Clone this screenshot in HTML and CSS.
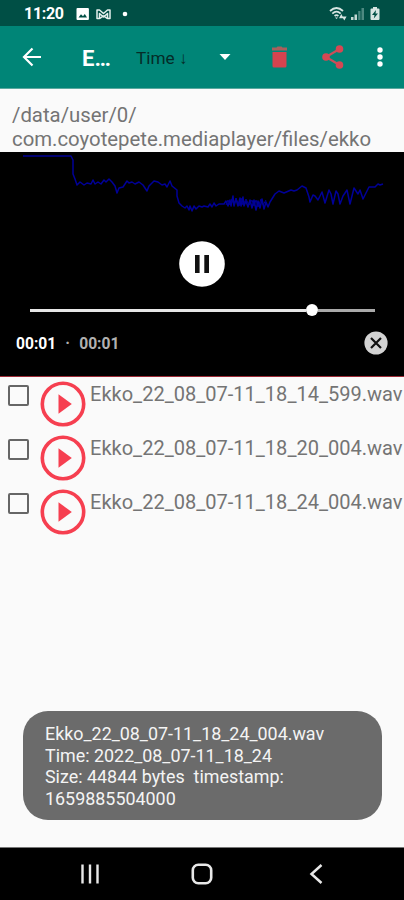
FILE: index.html
```html
<!DOCTYPE html>
<html lang="en">
<head>
<meta charset="utf-8">
<meta name="viewport" content="width=device-width">
<title>Ekko</title>
<link rel="stylesheet" href="styles.css">
</head>
<body>
<div class="phone">
  <header class="status">
    <span class="clock">11:20</span>
    <svg class="notices" width="54" height="14" viewBox="0 0 54 14">
      <path fill="#fff" fill-rule="evenodd" d="M1.500 1h10.400q1 0 1 1v10q0 1-1 1H1.500q-1 0-1-1V2q0-1 1-1zM2.500 10.500h8.500L8.800 7 7 9.300 5 7.300z"/>
      <path fill="none" stroke="#e4efed" stroke-width="1.500" stroke-linejoin="round" d="M21 3v8.500h2.500V6.500l4 3.500 4-3.500v5H34V3h-2.500l-4 3.500-4-3.500zM24 11.500l3.500-3M31 11.500l-3.500-3"/>
      <circle cx="49" cy="7" r="2.300" fill="#fff"/>
    </svg>
    <svg class="signals" width="54" height="16" viewBox="0 0 54 16">
      <g fill="none" stroke="#d7e5e2" stroke-width="1.800">
        <path d="M1 5Q7.500-1 14 5M3.300 7.600q4.200-4 8.400 0M5.600 10q1.900-1.700 3.800 0"/>
      </g>
      <path fill="#d7e5e2" d="M6 11.500h3L7.500 13zM10 12.300l2.300-4.300 2.300 4.300zM13 10.500h4.600l-2.300 4z"/>
      <path fill="#c3d7d3" d="M22 11h2.500v3H22zM25.500 8.500H28V14h-2.500z"/>
      <path fill="#4d8981" d="M29.200 5h2.300v9h-2.300zM32.500 2H35v12h-2.500z"/>
      <path fill="#d7e5e2" d="M44 1h4v1.500h1.500q1 0 1 1V13q0 1-1 1h-7q-1 0-1-1V3.500q0-1 1-1H44z"/>
      <path fill="#004f45" d="M47 4l-4 5h2.500l-.7 3.500L49 7.500h-2.500z"/>
    </svg>
  </header>
  <nav class="appbar">
    <svg class="back" width="20" height="20" viewBox="0 0 20 20"><path fill="none" stroke="#fff" stroke-width="2.200" d="M19 10H2.500M10.500 1.500L2 10l8.500 8.500"/></svg>
    <h1 class="title">E…</h1>
    <span class="sort">Time ↓</span>
    <svg class="caret" width="12" height="6" viewBox="0 0 12 6"><path fill="#fff" d="M.5 0h11L6 6z"/></svg>
    <svg class="trash" width="17" height="22" viewBox="0 0 17 22"><path fill="#d4434f" d="M1.500 6h14v14q0 1.500-1.500 1.500H3Q1.500 21.500 1.500 20z"/><path fill="#a95f5c" d="M1 1.500h4.500L6.500.500h4l1 1H16V4.500H1z"/></svg>
    <svg class="share" width="22" height="24" viewBox="0 0 22 24"><path fill="none" stroke="#c94f59" stroke-width="2.200" d="M17.500 4L4 12l13.500 8"/><g fill="#d64753"><circle cx="17.500" cy="4" r="3.800"/><circle cx="4" cy="12" r="3.800"/><circle cx="17.500" cy="20" r="3.800"/></g></svg>
    <svg class="more" width="6" height="20" viewBox="0 0 6 20"><g fill="#fff"><circle cx="3" cy="3" r="2.700"/><circle cx="3" cy="10" r="2.700"/><circle cx="3" cy="17" r="2.700"/></g></svg>
  </nav>
  <p class="path">/data/user/0/<br>com.coyotepete.mediaplayer/files/ekko</p>
  <section class="player">
    <svg class="wave" width="404" height="78" viewBox="0 0 404 78">
      <path fill="none" stroke="#000098" stroke-width="1.500" stroke-linejoin="round" d="M23 4H71L73 8V22L75 27L77 33L80 30L84 33L87 31L91 32L93 28L95 32L98 30L101 32L104 28L106 30L109 27L112 30L115 34L117 41L119 36L123 35L127 29L129 31L132 30L135 32L139 30L143 33L147 39L149 34L154 29L158 30L162 33L165 32L167 35L170 29L172 34L177 38V44L179 51L182 54L185 56L187 54L189 58L190 54L192 59L194 54L196 57L199 54L202 55L204 54L208 55L210 52L212 55L214 51L216 54L219 52L224 52L226 49L228 54L230 48L231 54L233 44L234 54L236 47L238 54L240 46L241 54L243 45L244 54L246 49L248 55L250 48L252 56L254 48L256 58L258 49L260 56L262 47L264 57L266 50L268 55L270 50L275 42L279 39L284 41L291 38L294 39L297 38L302 34L306 36L309 45L310 50L313 43L315 44L318 48L322 40L325 51L329 38L331 42L333 52L336 39L338 42L340 52L343 44L347 38L350 52L354 36L358 42L360 38L363 47L367 39L369 35L375 35L378 32L380 33L383 32"/>
      <path fill="none" stroke="#000092" stroke-width="1" d="M226 53l2-5 2 5 2-6 2 6 2-7 3 8 2-8 2 7 3-6 3 6 3-5 2 6 2-6 2 7 3-8 2 6 3-5"/>
    </svg>
    <svg class="pause" width="46" height="46" viewBox="0 0 46 46"><circle cx="23" cy="23" r="22.800" fill="#fff"/><path fill="#111" d="M16 14h4.600v18H16zM25.300 14H30v18h-4.700z"/></svg>
    <div class="seek"><i class="played"></i><i class="thumb"></i><i class="rest"></i></div>
    <div class="times">
      <span class="now">00:01</span><span class="dot">·</span><span class="total">00:01</span>
      <svg class="close" width="24" height="24" viewBox="0 0 24 24"><circle cx="12" cy="12" r="11.600" fill="#d3d3d3"/><path stroke="#111" stroke-width="2.200" d="M7 7l10 10M17 7L7 17"/></svg>
    </div>
  </section>
  <ul class="files">
    <li class="file"><span class="check"></span><svg class="play" width="46" height="46" viewBox="0 0 46 46"><circle cx="23" cy="23" r="20.700" fill="none" stroke="#f63f50" stroke-width="3.600"/><path fill="#f63f50" d="M18.500 13.300l13.300 9.700-13.300 9.700z"/></svg><span class="name">Ekko_22_08_07-11_18_14_599.wav</span></li>
    <li class="file"><span class="check"></span><svg class="play" width="46" height="46" viewBox="0 0 46 46"><circle cx="23" cy="23" r="20.700" fill="none" stroke="#f63f50" stroke-width="3.600"/><path fill="#f63f50" d="M18.500 13.300l13.300 9.700-13.300 9.700z"/></svg><span class="name">Ekko_22_08_07-11_18_20_004.wav</span></li>
    <li class="file"><span class="check"></span><svg class="play" width="46" height="46" viewBox="0 0 46 46"><circle cx="23" cy="23" r="20.700" fill="none" stroke="#f63f50" stroke-width="3.600"/><path fill="#f63f50" d="M18.500 13.300l13.300 9.700-13.300 9.700z"/></svg><span class="name">Ekko_22_08_07-11_18_24_004.wav</span></li>
  </ul>
  <div class="toast">Ekko_22_08_07-11_18_24_004.wav<br>Time: 2022_08_07-11_18_24<br>Size: 44844 bytes&nbsp; timestamp:<br>1659885504000</div>
  <footer class="keys">
    <svg width="20" height="20" viewBox="0 0 20 20"><path stroke="#e8e8e8" stroke-width="2.400" d="M2.500.500v19M10 .5v19M17.500.500v19"/></svg>
    <svg class="home" width="22" height="22" viewBox="0 0 22 22"><rect x="1.800" y="1.800" width="18.400" height="18.400" rx="5.500" fill="none" stroke="#e8e8e8" stroke-width="2.600"/></svg>
    <svg class="prev" width="14" height="20" viewBox="0 0 14 20"><path fill="none" stroke="#e8e8e8" stroke-width="2.500" d="M12.500 1L2.500 10l10 9"/></svg>
  </footer>
</div>
</body>
</html>
```
FILE: styles.css
```css
* { box-sizing: border-box; }
body { margin: 0; font-family: Roboto, "Liberation Sans", sans-serif; background: #fafafa; }
svg { display: block; flex: none; }
.phone { width: 404px; height: 900px; display: flex; flex-direction: column; overflow: hidden; background: #fafafa; }

.status { height: 26px; flex: none; display: flex; align-items: center; padding: 1px 21px 0 24px; background: #004f45; }
.clock { width: 52px; color: #fff; font-size: 16px; font-weight: 700; line-height: 24px; letter-spacing: -0.3px; }
.signals { margin-left: auto; }

.appbar { height: 63px; flex: none; display: flex; align-items: center; padding-left: 22px; background: #008577; border-bottom: 1px solid #5aa99f; }
.title { width: 54px; margin: 4px 0 0 40px; color: #fff; font-size: 22px; font-weight: 700; line-height: 28px; }
.sort { width: 83px; padding-top: 2px; color: #052c28; font-size: 17.2px; line-height: 24px; white-space: nowrap; }
.trash { margin-left: 40px; }
.share { margin-left: 34px; }
.more { margin-left: 33px; }

.path { height: 63px; flex: none; margin: 0; padding: 14px 12px 0; color: #747474; font-size: 20.35px; line-height: 24px; white-space: nowrap; }

.player { height: 225px; flex: none; display: flex; flex-direction: column; background: #000; border-bottom: 1px solid #9d2b36; }
.pause { margin: 11px 0 0 179px; }
.seek { display: flex; align-items: center; height: 12px; margin: 17px 29px 0 30px; }
.played { width: 276px; height: 3px; background: #e6e6e6; }
.thumb { width: 12px; height: 12px; border-radius: 50%; background: #fff; }
.rest { flex: 1; height: 3px; background: #a9a9a9; }
.times { display: flex; align-items: center; height: 24px; margin: 15px 16px 0; font-size: 15.6px; font-weight: 700; line-height: 24px; color: #b0b0b0; }
.now, .total { padding-top: 1px; }
.now { color: #fff; }
.dot { width: 23px; text-align: center; }
.close { margin-left: auto; }

.files { list-style: none; margin: 0; padding: 4px 0 0; flex: 1; min-height: 0; }
.file { display: flex; align-items: flex-start; height: 54px; padding-left: 8px; }
.check { width: 21px; height: 21px; flex: none; margin-top: 4px; border: 2px solid #666; border-radius: 2px; }
.play { margin: 0 0 0 11px; }
.name { margin-left: 4px; color: #747474; font-size: 20.05px; line-height: 26px; white-space: nowrap; }

.toast { width: 359px; height: 109px; flex: none; margin: 0 0 27px 23px; padding: 12px 22px; border-radius: 25px; background: #6b6b6b; color: #f4f4f4; font-size: 17.9px; line-height: 21.5px; white-space: nowrap; }

.keys { height: 53px; flex: none; display: flex; align-items: center; padding-left: 80px; background: #000; border-top: 1px solid #777; }
.home { margin-left: 91px; }
.prev { margin-left: 96px; }
```
